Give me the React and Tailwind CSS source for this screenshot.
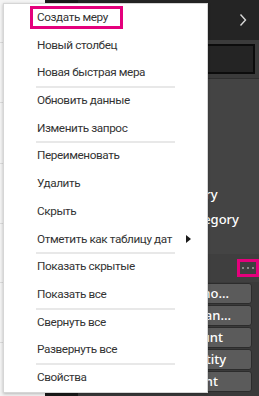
const ITEMS = [
  { label: 'Создать меру', hot: true },
  { label: 'Новый столбец' },
  { label: 'Новая быстрая мера', sep: true },
  { label: 'Обновить данные' },
  { label: 'Изменить запрос', sep: true },
  { label: 'Переименовать' },
  { label: 'Удалить' },
  { label: 'Скрыть' },
  { label: 'Отметить как таблицу дат', sub: true, sep: true },
  { label: 'Показать скрытые' },
  { label: 'Показать все', sep: true },
  { label: 'Свернуть все' },
  { label: 'Развернуть все', sep: true },
  { label: 'Свойства' },
];

const FIELDS = [
  { label: 'Sum of Amo...', pr: 'pr-[22px]' },
  { label: 'Average of Quan...', pr: 'pr-[20px]' },
  { label: 'Count', pr: 'pr-[28px]' },
  { label: 'Quantity', pr: 'pr-[25px]' },
  { label: 'Amount', pr: 'pr-[33px]' },
];

function MenuItem({ label, hot, sub }) {
  if (hot) {
    return (
      <div className="h-[27.7px] flex items-center pl-[26px]">
        <span className="h-[23px] w-[93px] border-[3px] border-[#e4007c] pl-[4px] flex items-center whitespace-nowrap">{label}</span>
      </div>
    );
  }
  return (
    <div className="h-[27.7px] flex items-center pl-[33px] pr-[16px] whitespace-nowrap">
      <span className="flex-1">{label}</span>
      {sub && (
        <svg width="5" height="8" viewBox="0 0 5 8">
          <path d="M0 0 L5 4 L0 8 Z" fill="#1a1a1a" />
        </svg>
      )}
    </div>
  );
}

function Separator() {
  return <div className="relative z-10 ml-[32px] w-[139px] h-[2px] -my-[1px] bg-[#e8e8e8]" />;
}

export default function App() {
  return (
    <div className="relative w-[259px] h-[396px] overflow-hidden flex font-['Noto_Sans','DejaVu_Sans',sans-serif]">
      {/* report canvas strip */}
      <div className="w-[45px] bg-[#f4f4f4] flex flex-col">
        <div className="h-[43px] border-b border-[#dcdcdc]" />
        <div className="h-[60px] border-b border-[#dcdcdc]" />
        <div className="h-[61px] border-b border-[#dcdcdc]" />
        <div className="h-[60px] border-b border-[#dcdcdc]" />
        <div className="h-[59px] border-b border-[#dcdcdc]" />
        <div className="h-[60px] border-b border-[#dcdcdc]" />
      </div>
      <div className="w-[33px] bg-[#1a1a1a]" />

      {/* fields pane */}
      <div className="flex-1 flex flex-col bg-[#3a3a3a]">
        <div className="h-[40px] bg-[#242424] flex items-center justify-end pr-[12px]">
          <svg width="8" height="14" viewBox="0 0 8 14">
            <path d="M1.5 1.5 L6.5 7 L1.5 12.5" fill="none" stroke="#d8d8d8" strokeWidth="1.4" />
          </svg>
        </div>
        <div className="h-[39px] bg-[#3b3b3b] border-b border-[#2f2f2f] flex items-center pl-[8px] pr-[4px]">
          <div className="h-[30px] flex-1 border-2 border-[#0c0c0c] bg-[#242424]" />
        </div>
        <div className="h-[175px] bg-[#444444] flex flex-col pt-[109px] pl-[83px] text-white text-[13px] font-medium leading-none">
          <div className="h-[25px]">Category</div>
          <div className="h-[25px]">Subcategory</div>
        </div>
        <div className="h-[28px] bg-[#3f3f3f] flex items-center justify-end">
          <div className="w-[22px] h-[18px] border-[3px] border-[#e4007c] flex items-center justify-center gap-[3px]">
            <span className="w-[2px] h-[2px] bg-[#8a8a8a]" />
            <span className="w-[2px] h-[2px] bg-[#8a8a8a]" />
            <span className="w-[2px] h-[2px] bg-[#8a8a8a]" />
          </div>
        </div>
        <div className="flex flex-col gap-[1px] pt-[1px] pl-[5px] pr-[7px]">
          {FIELDS.map((f) => (
            <div
              key={f.label}
              className={`h-[21px] rounded-[3px] bg-[#5b5b5b] border border-[#2c2c2c] flex items-center justify-end ${f.pr} text-white text-[13px] font-medium whitespace-nowrap overflow-hidden`}
            >
              {f.label}
            </div>
          ))}
        </div>
      </div>

      {/* context menu */}
      <div className="absolute left-[3px] top-[3px] w-[205px] h-[390px] bg-white border border-[#d6d6d6] shadow-[0_1px_3px_rgba(0,0,0,0.25)] font-['Roboto',sans-serif] text-[11.75px] tracking-[-0.4px] text-[#333333] flex flex-col">
        {ITEMS.map((it) => (
          <div key={it.label} className="contents">
            <MenuItem {...it} />
            {it.sep && <Separator />}
          </div>
        ))}
      </div>
    </div>
  );
}
